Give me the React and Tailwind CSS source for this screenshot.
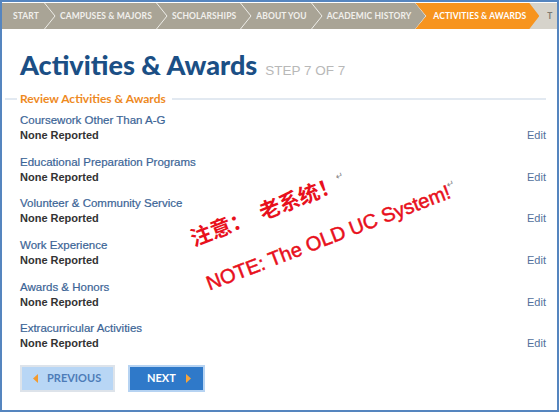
import React from "react";

const steps = ["Start", "Campuses & Majors", "Scholarships", "About You", "Academic History"];

const sections = [
  "Coursework Other Than A-G",
  "Educational Preparation Programs",
  "Volunteer & Community Service",
  "Work Experience",
  "Awards & Honors",
  "Extracurricular Activities",
];

function Chevron() {
  return (
    <svg width="12" height="26" viewBox="0 0 12 26" className="shrink-0">
      <path d="M0.5 0 L11 13 L0.5 26" fill="none" stroke="#eeede8" strokeWidth="1" />
    </svg>
  );
}

function Caret({ dir, color }) {
  const d = dir === "left" ? "M5 0 L0 4.5 L5 9 Z" : "M0 0 L5 4.5 L0 9 Z";
  return (
    <svg width="5" height="9" viewBox="0 0 5 9" className="shrink-0">
      <path d={d} fill={color} />
    </svg>
  );
}

export default function App() {
  return (
    <div className="w-[560px] h-[413px] bg-white">
      <div className="relative w-[559px] h-[412px] overflow-hidden border-2 border-[#5585bf] bg-white font-['Liberation_Sans',Arial,sans-serif]">
        {/* step bar */}
        <nav className="mt-[1px] flex h-[26px] whitespace-nowrap bg-[#a9a496] font-['Lato',sans-serif] text-[8.5px] font-bold uppercase tracking-[0.1px] text-[#f1f0ec]">
          {steps.map((step, i) => (
            <div key={step} className="flex shrink-0 items-center">
              <span className={i === 0 ? "pl-[11px] pr-[5px]" : "pl-[4px] pr-[4px]"}>{step}</span>
              <Chevron />
            </div>
          ))}
          <div className="relative z-10 -ml-[12px] flex shrink-0 items-center bg-[#f7941e] pl-[18px] pr-[13px] text-white [clip-path:polygon(0_0,calc(100%-10px)_0,100%_50%,calc(100%-10px)_100%,0_100%,11px_50%)]">
            Activities &amp; Awards
          </div>
          <div className="-ml-[12px] flex flex-1 items-center bg-[#d6d3cb] pl-[20px] text-[#7d7a72]">T</div>
        </nav>

        <div className="pl-[18px] pr-[11px]">
          <div className="mt-[22px] flex items-baseline gap-[8px]">
            <h1 className="font-['Lato',sans-serif] text-[27px] font-black leading-none text-[#1b4f85]">
              Activities &amp; Awards
            </h1>
            <span className="text-[13.5px] text-[#b8b8b8]">STEP 7 OF 7</span>
          </div>

          <div className="-ml-[15px] mt-[11px] flex items-center gap-[3px]">
            <div className="h-[2px] w-[12px] bg-[#e2e9f1]" />
            <span className="font-['Lato',sans-serif] text-[12px] font-bold leading-[14px] text-[#ee8a1f]">
              Review Activities &amp; Awards
            </span>
            <div className="ml-[3px] h-[2px] flex-1 bg-[#e2e9f1]" />
          </div>

          <div className="mt-[7px] flex flex-col gap-[11.6px]">
            {sections.map((name) => (
              <div key={name} className="text-[11.5px] leading-[15px]">
                <div className="text-[#3b6496] [-webkit-text-stroke:0.2px_#3b6496]">{name}</div>
                <div className="flex justify-between">
                  <span className="text-[11px] font-bold text-[#333333]">None Reported</span>
                  <a className="text-[11px] text-[#52709c]">Edit</a>
                </div>
              </div>
            ))}
          </div>

          <div className="mt-[14px] flex gap-[13px] font-['Lato',sans-serif] text-[11px] font-bold">
            <button className="flex h-[27px] w-[95px] items-center gap-[9px] border-2 border-[#dde3ea] bg-[#b8d6f5] pl-[11px] text-[#4d7cb8]">
              <Caret dir="left" color="#f39a2e" />
              PREVIOUS
            </button>
            <button className="flex h-[27px] w-[77px] items-center gap-[10px] border-2 border-[#b6d3f2] bg-[#2f79c9] pl-[17px] text-white">
              NEXT
              <Caret dir="right" color="#f7a43a" />
            </button>
          </div>
        </div>

        {/* red annotation */}
        <div className="absolute left-[189px] top-[226px] origin-left -rotate-[21deg] whitespace-nowrap font-['Noto_Sans_CJK_SC',sans-serif] text-[21px] font-bold leading-none text-[#e8101c]">
          注意：　老系统！<span className="align-top text-[9px] font-normal text-[#8a8a8a]">↵</span>
        </div>
        <div className="absolute left-[205px] top-[272px] origin-left -rotate-[21deg] whitespace-nowrap font-['Liberation_Sans',Arial,sans-serif] text-[20px] leading-none text-[#e8101c] [-webkit-text-stroke:0.5px_#e8101c]">
          NOTE: The OLD UC System!<span className="align-top text-[9px] text-[#8a8a8a] [-webkit-text-stroke:0]">↵</span>
        </div>
      </div>
    </div>
  );
}
